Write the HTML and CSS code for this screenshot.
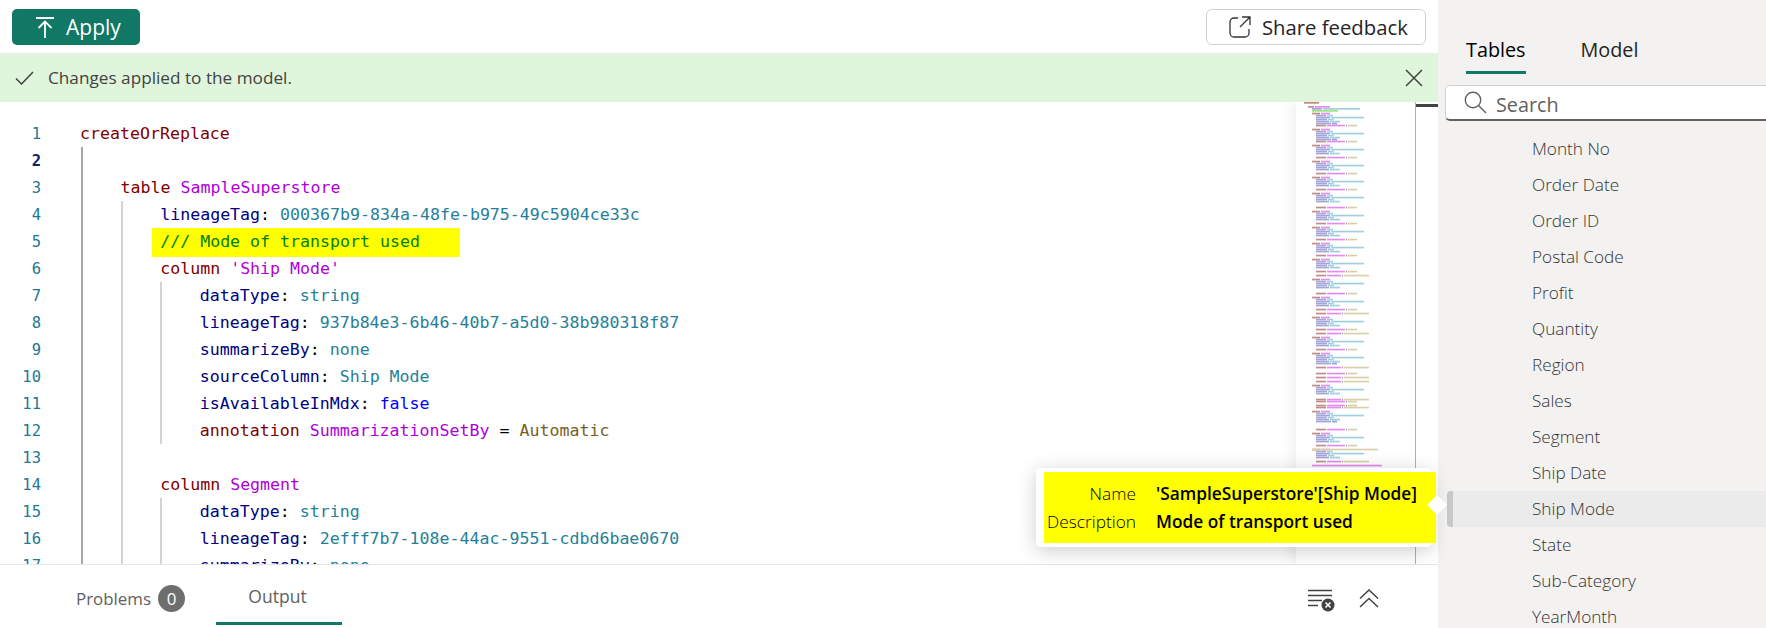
FILE: index.html
```html
<!DOCTYPE html>
<html lang="en">
<head>
<meta charset="utf-8">
<title>TMDL view</title>
<link rel="stylesheet" href="styles.css">
</head>
<body>
<div class="app">
  <main class="main">
    <header class="toolbar">
      <button class="apply">
        <svg class="apply-icon" width="18" height="22" viewBox="0 0 18 22" fill="none" stroke="#fff" stroke-width="1.800"><path d="M0 1h18M9 21V4.500M2.500 11L9 4.500l6.500 6.500"/></svg>
        <span>Apply</span>
      </button>
      <button class="share">
        <svg width="22" height="22" viewBox="0 0 22 22" fill="none" stroke="#333" stroke-width="1.300"><path d="M9 2H5a4 4 0 0 0-4 4v11a4 4 0 0 0 4 4h11a4 4 0 0 0 4-4v-4M13 1h8v8M21 1l-10 10"/></svg>
        <span>Share feedback</span>
      </button>
    </header>
    <div class="banner">
      <svg width="19" height="14" viewBox="0 0 19 14" fill="none" stroke="#424242" stroke-width="1.500"><path d="M1 7.500L6.500 13 18 1"/></svg>
      <span class="banner-text">Changes applied to the model.</span>
      <svg class="banner-close" width="18" height="18" viewBox="0 0 18 18" fill="none" stroke="#424242" stroke-width="1.500"><path d="M1 1l16 16M17 1L1 17"/></svg>
    </div>
    <section class="editor">
      <div class="gutter">
        <div>1</div><div class="current">2</div><div>3</div><div>4</div><div>5</div><div>6</div><div>7</div><div>8</div><div>9</div><div>10</div><div>11</div><div>12</div><div>13</div><div>14</div><div>15</div><div>16</div><div>17</div>
      </div>
      <div class="code">
        <div class="ln"><span class="kw">createOrReplace</span></div>
        <div class="block strong">
          <div class="ln">&nbsp;</div>
          <div class="ln"><span class="kw">table</span> <span class="nm">SampleSuperstore</span></div>
          <div class="block">
            <div class="ln"><span class="key">lineageTag</span>: <span class="val">000367b9-834a-48fe-b975-49c5904ce33c</span></div>
            <div class="ln"><span class="hl">/// Mode of transport used</span></div>
            <div class="ln"><span class="kw">column</span> <span class="nm">'Ship Mode'</span></div>
            <div class="block">
              <div class="ln"><span class="key">dataType</span>: <span class="val">string</span></div>
              <div class="ln"><span class="key">lineageTag</span>: <span class="val">937b84e3-6b46-40b7-a5d0-38b980318f87</span></div>
              <div class="ln"><span class="key">summarizeBy</span>: <span class="val">none</span></div>
              <div class="ln"><span class="key">sourceColumn</span>: <span class="val">Ship Mode</span></div>
              <div class="ln"><span class="key">isAvailableInMdx</span>: <span class="bool">false</span></div>
              <div class="ln"><span class="kw">annotation</span> <span class="nm">SummarizationSetBy</span> = <span class="str">Automatic</span></div>
            </div>
            <div class="ln">&nbsp;</div>
            <div class="ln"><span class="kw">column</span> <span class="nm">Segment</span></div>
            <div class="block">
              <div class="ln"><span class="key">dataType</span>: <span class="val">string</span></div>
              <div class="ln"><span class="key">lineageTag</span>: <span class="val">2efff7b7-108e-44ac-9551-cdbd6bae0670</span></div>
              <div class="ln"><span class="key">summarizeBy</span>: <span class="val">none</span></div>
            </div>
          </div>
        </div>
      </div>
      <div class="minimap">
        <svg width="119" height="462" viewBox="0 0 119 462">
          <defs>
            <g id="c">
              <rect x="16" y="0" width="8" height="1.700" fill="#c48a8a"/><rect x="25" y="0" width="9" height="1.700" fill="#e38cf2"/>
              <rect x="20" y="2" width="10" height="1.700" fill="#a3a6d6"/><rect x="31" y="2" width="6" height="1.700" fill="#9fd0dc"/>
              <rect x="20" y="4" width="14" height="1.700" fill="#a3a6d6"/><rect x="35" y="4" width="33" height="1.700" fill="#9fd0dc"/>
              <rect x="20" y="6" width="11" height="1.700" fill="#a3a6d6"/><rect x="32" y="6" width="6" height="1.700" fill="#9fd0dc"/>
              <rect x="20" y="8" width="13" height="1.700" fill="#a3a6d6"/><rect x="34" y="8" width="10" height="1.700" fill="#9fd0dc"/>
            </g>
            <g id="a">
              <rect x="20" y="0" width="10" height="1.700" fill="#c48a8a"/><rect x="31" y="0" width="18" height="1.700" fill="#e38cf2"/><rect x="50" y="0" width="1" height="1.700" fill="#999"/><rect x="52" y="0" width="9" height="1.700" fill="#d6cfa8"/>
            </g>
            <g id="p">
              <rect x="20" y="0" width="10" height="1.700" fill="#c48a8a"/><rect x="31" y="0" width="14" height="1.700" fill="#e38cf2"/><rect x="46" y="0" width="1" height="1.700" fill="#999"/><rect x="48" y="0" width="25" height="1.700" fill="#d6cfa8"/>
            </g>
            <g id="m">
              <rect x="20" y="0" width="15" height="1.700" fill="#a3a6d6"/><rect x="36" y="0" width="5" height="1.700" fill="#8f9cf0"/>
            </g>
          </defs>
          <rect x="8" y="0" width="15" height="1.700" fill="#c48a8a"/>
          <rect x="12" y="4" width="6" height="1.700" fill="#c48a8a"/><rect x="19" y="4" width="15" height="1.700" fill="#e38cf2"/>
          <rect x="16" y="6" width="10" height="1.700" fill="#a3a6d6"/><rect x="27" y="6" width="37" height="1.700" fill="#9fd0dc"/>
          <rect x="16" y="8" width="26" height="1.700" fill="#9fe27f"/>
          <use href="#c" y="10.700"/><use href="#m" y="20.700"/><use href="#a" y="22.700"/>
          <use href="#c" y="26.700"/><use href="#m" y="36.700"/><use href="#a" y="38.700"/>
          <use href="#c" y="42.700"/><use href="#a" y="54.700"/>
          <use href="#c" y="58.700"/><use href="#a" y="70.700"/>
          <use href="#c" y="74.700"/><use href="#a" y="86.700"/>
          <use href="#c" y="90.700"/><use href="#a" y="104.700"/>
          <use href="#c" y="108.700"/><use href="#a" y="120.700"/>
          <use href="#c" y="124.700"/><use href="#a" y="136.700"/>
          <use href="#c" y="140.700"/><use href="#a" y="152.700"/>
          <use href="#c" y="156.700"/><use href="#a" y="168.700"/><use href="#p" y="172.700"/>
          <use href="#c" y="176.700"/><use href="#a" y="190.700"/>
          <use href="#c" y="194.700"/><use href="#a" y="206.700"/><use href="#p" y="210.700"/>
          <use href="#c" y="214.700"/><use href="#a" y="226.700"/><use href="#p" y="230.700"/>
          <use href="#c" y="234.700"/><use href="#a" y="246.700"/>
          <use href="#c" y="250.700"/><use href="#m" y="260.700"/><use href="#p" y="264.700"/><use href="#a" y="270.700"/><use href="#p" y="274.700"/><use href="#p" y="278.700"/>
          <use href="#c" y="282.700"/><use href="#p" y="296.700"/><use href="#a" y="298.700"/><use href="#a" y="302.700"/><use href="#p" y="304.700"/>
          <use href="#c" y="308.700"/><use href="#m" y="318.700"/><use href="#a" y="326.700"/>
          <use href="#c" y="330.700"/><use href="#a" y="342.700"/>
          <use href="#c" y="346.700"/><use href="#p" y="358.700"/>
          <rect x="16" y="346.700" width="66" height="1.700" fill="#d6cfa8"/>
          <rect x="16" y="362.700" width="70" height="1.700" fill="#e38cf2"/>
        </svg>
      </div>
      <div class="ruler"><div class="ruler-mark"></div></div>
    </section>
    <footer class="panel">
      <div class="tab-problems"><span>Problems</span><span class="badge">0</span></div>
      <div class="tab-output">Output</div>
      <div class="panel-actions">
        <svg width="27" height="23" viewBox="0 0 27 23" fill="none" stroke="#424242" stroke-width="1.300"><path d="M0 1.500h24M0 6.500h24M0 11.500h14M0 16.500h10"/><circle cx="20" cy="16" r="6.500" fill="#424242" stroke="none"/><path d="M17.500 13.500l5 5M22.500 13.500l-5 5" stroke="#fff" stroke-width="1.600"/></svg>
        <svg width="20" height="19" viewBox="0 0 20 19" fill="none" stroke="#424242" stroke-width="1.500"><path d="M1 9.500L10 1l9 8.500M1 18l9-8.500 9 8.500"/></svg>
      </div>
    </footer>
    <div class="tooltip">
      <div class="tooltip-body">
        <span class="tip-label">Name</span><span class="tip-value">'SampleSuperstore'[Ship Mode]</span>
        <span class="tip-label">Description</span><span class="tip-value">Mode of transport used</span>
      </div>
      <div class="tooltip-arrow"></div>
    </div>
  </main>
  <aside class="side">
    <nav class="side-tabs">
      <div class="side-tab active">Tables</div>
      <div class="side-tab">Model</div>
    </nav>
    <div class="search">
      <svg width="23" height="23" viewBox="0 0 23 23" fill="none" stroke="#616161" stroke-width="1.400"><circle cx="9" cy="9" r="7.700"/><path d="M14.500 14.500L22 22"/></svg>
      <span>Search</span>
    </div>
    <ul class="fields">
      <li>Month No</li>
      <li>Order Date</li>
      <li>Order ID</li>
      <li>Postal Code</li>
      <li>Profit</li>
      <li>Quantity</li>
      <li>Region</li>
      <li>Sales</li>
      <li>Segment</li>
      <li>Ship Date</li>
      <li class="selected">Ship Mode</li>
      <li>State</li>
      <li>Sub-Category</li>
      <li>YearMonth</li>
    </ul>
  </aside>
</div>
</body>
</html>
```
FILE: styles.css
```css
* { box-sizing: border-box; }
html, body { margin: 0; height: 100%; overflow: hidden; background: #fff; }
body { font-family: "Open Sans", "Noto Sans", sans-serif; color: #242424; }
.app { display: flex; width: 1766px; height: 628px; overflow: hidden; }

.main { position: relative; width: 1438px; display: flex; flex-direction: column; }

.toolbar { height: 53px; display: flex; justify-content: space-between; align-items: flex-start; padding: 9px 12px 0 12px; }
button { font-family: inherit; cursor: pointer; }
.apply { width: 128px; height: 36px; background: #117865; border: 0; border-radius: 5px; color: #fff; font-size: 21px; display: flex; align-items: center; padding: 0 0 0 24px; gap: 12px; }
.apply-icon { margin-top: 1px; }
.share { width: 220px; height: 36px; background: #fff; border: 1px solid #d1d1d1; border-radius: 6px; color: #242424; font-size: 20.300px; display: flex; align-items: center; padding: 0 0 0 22px; gap: 11px; }

.banner { height: 49px; background: #dff6dd; display: flex; align-items: center; padding: 0 15px; flex: none; }
.banner-text { margin-left: 14px; font-size: 17.200px; font-weight: 400; color: #424242; }
.banner-close { margin-left: auto; }

.editor { height: 462px; flex: none; display: flex; overflow: hidden; }
.gutter { width: 41px; flex: none; padding-top: 19px; text-align: right; color: #237893; font-family: "DejaVu Sans Mono", monospace; font-size: 15.500px; line-height: 27px; }
.gutter .current { color: #0b216f; font-weight: bold; }
.code { flex: 1; min-width: 0; padding: 18px 0 0 39px; font-family: "DejaVu Sans Mono", monospace; font-size: 16.600px; line-height: 27px; color: #000; }
.ln { height: 27px; white-space: pre; }
.block { border-left: 2px solid #d4d4d4; padding-left: 37.600px; }
.block.strong { border-left-color: #a6a6a6; margin-left: 1px; }
.kw { color: #800000; }
.nm { color: #af00db; }
.key { color: #000080; }
.val { color: #267f99; }
.bool { color: #0000ff; }
.str { color: #795e26; }
.hl { display: inline-block; background: #ffff00; color: #008000; padding: 0 40px 0 8px; margin-left: -8px; height: 29px; }

.minimap { width: 120px; flex: none; background: #fff; border-right: 1px solid #b0b0b0; box-shadow: -6px 0 10px rgba(0,0,0,.05); }
.minimap svg { display: block; filter: blur(.3px); }
.ruler { width: 22px; flex: none; padding-top: 2px; }
.ruler-mark { height: 3px; background: #424242; }

.panel { height: 64px; flex: none; border-top: 1px solid #e6e6e6; background: #fff; display: flex; align-items: flex-start; position: relative; }
.tab-problems { display: flex; align-items: center; width: 110px; margin-left: 76px; margin-top: 20px; gap: 7px; font-size: 16.900px; color: #616161; font-weight: 500; }
.badge { width: 27px; height: 27px; flex: none; border-radius: 50%; background: #6e6e6e; color: #fff; display: flex; align-items: center; justify-content: center; font-weight: 400; }
.tab-output { width: 126px; height: 60px; margin-left: 30px; padding: 19px 3px 0 0; border-bottom: 3px solid #117865; text-align: center; font-size: 17.500px; color: #616161; font-weight: 500; }
.panel-actions { margin-left: auto; margin-right: 59px; margin-top: 24px; display: flex; gap: 24px; align-items: flex-start; }

.tooltip { position: absolute; left: 1036px; top: 468px; width: 395px; height: 79px; background: #fff; border-radius: 4px; box-shadow: 0 4px 20px rgba(0,0,0,.2); padding: 4px 0 0 8px; }
.tooltip-body { width: 392px; height: 71px; background: #ffff00; display: grid; grid-template-columns: 92px 1fr; column-gap: 20px; align-content: center; padding-top: 1px; font-size: 17.300px; line-height: 28px; color: #000; }
.tip-label { text-align: right; font-weight: 300; }
.tip-value { font-weight: 600; }
.tooltip-arrow { position: absolute; left: 394px; top: 30px; width: 14px; height: 14px; background: #fff; transform: rotate(45deg); }

.side { width: 328px; flex: none; background: #f3f2f1; overflow: hidden; }
.side-tabs { display: flex; height: 74px; padding: 0 0 0 28px; gap: 55px; }
.side-tab { height: 74px; padding-top: 35px; font-size: 19.800px; line-height: 30px; color: #242424; }
.side-tab.active { border-bottom: 3px solid #117865; color: #000; }
.search { margin: 11px -10px 0 7px; height: 36px; background: #fff; border: 1px solid #d1d1d1; border-bottom: 2px solid #616161; border-radius: 5px 0 0 5px; display: flex; align-items: center; gap: 9px; padding-left: 18px; font-size: 19.800px; color: #616161; }
.search span { position: relative; top: 2px; }
.fields { list-style: none; margin: 10px 0 0 0; padding: 0; }
.fields li { height: 36px; line-height: 36px; padding-left: 94px; font-size: 17.200px; color: #333; font-weight: 300; }
.fields li.selected { background: #ebebeb; margin-left: 9px; border-left: 6px solid #c8c8c8; border-radius: 4px 0 0 4px; padding-left: 79px; }
```
